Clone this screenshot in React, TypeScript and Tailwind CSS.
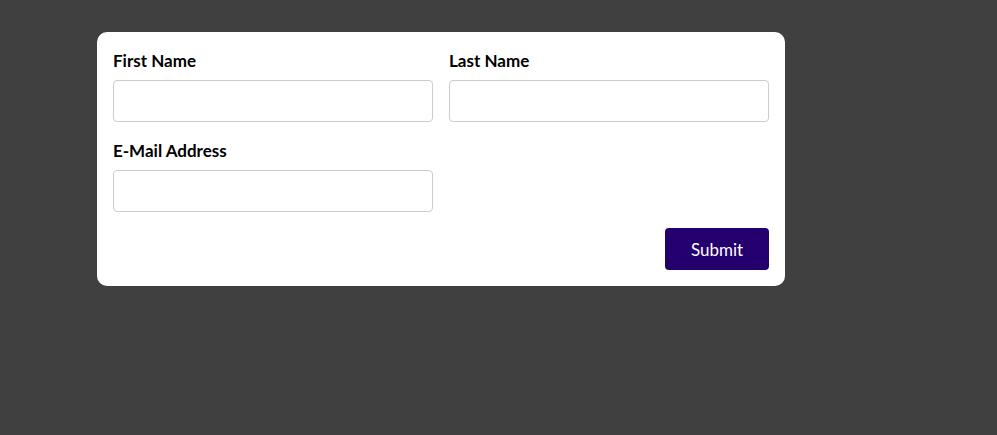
const fieldClass =
  'h-[42px] w-full rounded-[4px] border border-[#cccccc] bg-white px-3 text-base outline-none';

function Field({ label, type = 'text' }: { label: string; type?: string }) {
  return (
    <label className="flex flex-col">
      <span className="mb-2 h-6 pt-px text-[17px] leading-6 font-bold text-black">{label}</span>
      <input type={type} className={fieldClass} />
    </label>
  );
}

export default function App() {
  return (
    <div
      className="h-[435px] w-full bg-[#404040] pt-8 pl-[97px]"
      style={{ fontFamily: 'Lato, "Open Sans", sans-serif' }}
    >
      <form
        className="w-[688px] rounded-[10px] bg-white p-4"
        onSubmit={(e) => e.preventDefault()}
      >
        <div className="grid grid-cols-2 gap-4">
          <Field label="First Name" />
          <Field label="Last Name" />
          <Field label="E-Mail Address" type="email" />
        </div>
        <div className="mt-4 flex justify-end">
          <button
            type="submit"
            className="h-[42px] w-[104px] rounded-[4px] bg-[#24006f] pt-px text-[17px] text-white"
          >
            Submit
          </button>
        </div>
      </form>
    </div>
  );
}
